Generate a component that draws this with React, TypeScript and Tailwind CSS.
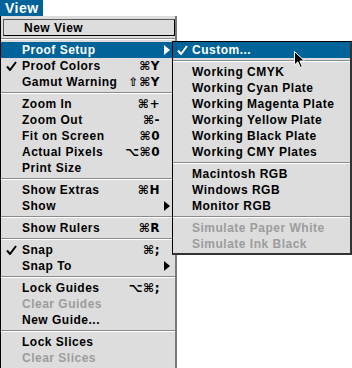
import React from "react";

const BLUE = "bg-[#00649a]";

type Item =
  | { sep: true }
  | {
      sep?: false;
      label: string;
      key?: string;
      check?: boolean;
      arrow?: boolean;
      disabled?: boolean;
      active?: boolean;
    };

const mainItems: Item[] = [
  { sep: true },
  { label: "Proof Setup", arrow: true, active: true },
  { label: "Proof Colors", key: "⌘Y", check: true },
  { label: "Gamut Warning", key: "⇧⌘Y" },
  { sep: true },
  { label: "Zoom In", key: "⌘+" },
  { label: "Zoom Out", key: "⌘-" },
  { label: "Fit on Screen", key: "⌘0" },
  { label: "Actual Pixels", key: "⌥⌘0" },
  { label: "Print Size" },
  { sep: true },
  { label: "Show Extras", key: "⌘H" },
  { label: "Show", arrow: true },
  { sep: true },
  { label: "Show Rulers", key: "⌘R" },
  { sep: true },
  { label: "Snap", key: "⌘;", check: true },
  { label: "Snap To", arrow: true },
  { sep: true },
  { label: "Lock Guides", key: "⌥⌘;" },
  { label: "Clear Guides", disabled: true },
  { label: "New Guide..." },
  { sep: true },
  { label: "Lock Slices" },
  { label: "Clear Slices", disabled: true },
];

const subItems: Item[] = [
  { label: "Custom...", check: true, active: true },
  { sep: true },
  { label: "Working CMYK" },
  { label: "Working Cyan Plate" },
  { label: "Working Magenta Plate" },
  { label: "Working Yellow Plate" },
  { label: "Working Black Plate" },
  { label: "Working CMY Plates" },
  { sep: true },
  { label: "Macintosh RGB" },
  { label: "Windows RGB" },
  { label: "Monitor RGB" },
  { sep: true },
  { label: "Simulate Paper White", disabled: true },
  { label: "Simulate Ink Black", disabled: true },
];

const Check = ({ white }: { white?: boolean }) => (
  <svg width="11" height="10" viewBox="0 0 11 10">
    <path
      d="M1 5.5 L4 9 L10 1"
      fill="none"
      stroke={white ? "#fff" : "#000"}
      strokeWidth="2"
    />
  </svg>
);

const Arrow = ({ white }: { white?: boolean }) => (
  <svg width="6" height="10" viewBox="0 0 6 10">
    <path d="M0 0 L6 5 L0 10 Z" fill={white ? "#fff" : "#000"} />
  </svg>
);

const Sep = () => (
  <div className="h-[6px] flex flex-col justify-center">
    <div className="h-px bg-[#8a8a8a]" />
    <div className="h-px bg-white" />
  </div>
);

const Row = ({ item, indent }: { item: Exclude<Item, { sep: true }>; indent: string }) => {
  const color = item.active ? "text-white" : item.disabled ? "text-[#9c9c9c]" : "text-black";
  return (
    <div className={`h-4 flex items-center relative ${item.active ? BLUE : ""} ${color}`}>
      <div className={`${indent} flex justify-center shrink-0`}>
        {item.check && <Check white={item.active} />}
      </div>
      <span className="flex-1 whitespace-nowrap tracking-[0.5px]">{item.label}</span>
      {item.key && (
        <span className="pr-[15px] whitespace-nowrap font-['DejaVu_Sans',sans-serif] text-[12px] tracking-[0.5px]">
          {item.key}
        </span>
      )}
      {item.arrow && (
        <span className="pr-[5px]">
          <Arrow white={item.active} />
        </span>
      )}
    </div>
  );
};

const Cursor = () => (
  <svg width="12" height="18" viewBox="0 0 12 18" className="absolute left-[294px] top-[51px]">
    <path
      d="M0.5 0.5 L0.5 14 L3.8 10.8 L6.3 16.5 L8.3 15.6 L5.9 10 L10.5 10 Z"
      fill="#000"
      stroke="#fff"
      strokeWidth="1"
    />
  </svg>
);

export default function App() {
  return (
    <div className="w-[352px] h-[368px] relative bg-white overflow-hidden font-['Liberation_Sans',Arial,sans-serif] font-bold text-[12px] leading-4">
      <div className="h-4 flex">
        <div className={`${BLUE} text-white w-[43px] pl-[5px] text-[14px] leading-4 tracking-[0.5px]`}>View</div>
      </div>

      {/* main menu */}
      <div className="w-[177px] bg-[#dddddd] border-l border-black border-r-2 border-r-[#7a7a7a] border-b-2 border-b-black pt-[3px]">
        <div className="mx-[2px] mr-[0px] h-[17px] flex items-center border border-[#555] border-r-black border-b-black pl-[20px] tracking-[0.5px]">
          New View
        </div>
        {mainItems.map((it, i) =>
          it.sep ? <Sep key={i} /> : <Row key={i} item={it} indent="w-[21px]" />
        )}
        <div className="h-[2px]" />
      </div>

      {/* Proof Setup submenu */}
      <div className="absolute left-[172px] top-[41px] w-[180px] bg-[#dddddd] border border-black border-r-2 border-b-2 border-r-[#333] border-b-[#333] pb-px">
        {subItems.map((it, i) =>
          it.sep ? <Sep key={i} /> : <Row key={i} item={it} indent="w-[19px]" />
        )}
      </div>

      <Cursor />
    </div>
  );
}
